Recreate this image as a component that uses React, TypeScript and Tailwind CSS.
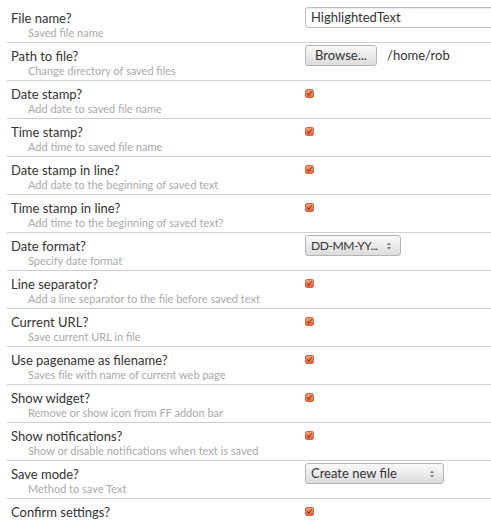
import React from "react";

interface Row {
  title: string;
  hint: string;
  control: "text" | "browse" | "check" | "dateSelect" | "modeSelect";
}

const rows: Row[] = [
  { title: "File name?", hint: "Saved file name", control: "text" },
  { title: "Path to file?", hint: "Change directory of saved files", control: "browse" },
  { title: "Date stamp?", hint: "Add date to saved file name", control: "check" },
  { title: "Time stamp?", hint: "Add time to saved file name", control: "check" },
  { title: "Date stamp in line?", hint: "Add date to the beginning of saved text", control: "check" },
  { title: "Time stamp in line?", hint: "Add time to the beginning of saved text?", control: "check" },
  { title: "Date format?", hint: "Specify date format", control: "dateSelect" },
  { title: "Line separator?", hint: "Add a line separator to the file before saved text", control: "check" },
  { title: "Current URL?", hint: "Save current URL in file", control: "check" },
  { title: "Use pagename as filename?", hint: "Saves file with name of current web page", control: "check" },
  { title: "Show widget?", hint: "Remove or show icon from FF addon bar", control: "check" },
  { title: "Show notifications?", hint: "Show or disable notifications when text is saved", control: "check" },
  { title: "Save mode?", hint: "Method to save Text", control: "modeSelect" },
  { title: "Confirm settings?", hint: "", control: "check" },
];

const Checkbox = () => (
  <span className="mt-[8px] block w-[9px] h-[9px] rounded-[2px] bg-gradient-to-b from-[#f4a27a] to-[#e2633a] border border-[#cf6a45]">
    <svg viewBox="0 0 9 9" className="w-full h-full">
      <path d="M1.5 4.3 L3.6 6.4 L7.6 1.6" fill="none" stroke="#8a3418" strokeWidth="1.4" />
    </svg>
  </span>
);

const Arrows = () => (
  <svg viewBox="0 0 6 10" className="w-[6px] h-[10px] shrink-0">
    <path d="M1 4 L3 1.5 L5 4 Z" fill="#777" />
    <path d="M1 6 L3 8.5 L5 6 Z" fill="#777" />
  </svg>
);

const SelectBox: React.FC<{ label: string; width: string; tight?: boolean }> = ({ label, width, tight }) => (
  <div
    className={`mt-[2px] h-[21px] ${width} flex items-center justify-between pl-[5px] pr-[8px] rounded-[3px] border border-[#b4b4b4] bg-gradient-to-b from-[#fafafa] to-[#dcdcdc] text-[#333] whitespace-nowrap`}
  >
    <span className={tight ? "text-[12px] tracking-[-0.4px]" : "text-[13px]"}>{label}</span>
    <Arrows />
  </div>
);

const Control: React.FC<{ kind: Row["control"] }> = ({ kind }) => {
  if (kind === "text")
    return (
      <div className="mt-[2px] h-[21px] w-[200px] flex items-center pl-[5px] rounded-[3px] border border-[#bdbdbd] bg-white text-[13px] text-[#333] shadow-[inset_0_1px_1px_rgba(0,0,0,0.08)]">
        HighlightedText
      </div>
    );
  if (kind === "browse")
    return (
      <div className="mt-[2px] flex items-center gap-[10px]">
        <div className="h-[21px] w-[72px] flex items-center justify-center rounded-[3px] border border-[#b4b4b4] bg-gradient-to-b from-[#fafafa] to-[#dcdcdc] text-[13px] text-[#333]">
          Browse...
        </div>
        <span className="text-[13px] text-[#333]">/home/rob</span>
      </div>
    );
  if (kind === "dateSelect") return <SelectBox label="DD-MM-YY..." width="w-[96px]" tight />;
  if (kind === "modeSelect") return <SelectBox label="Create new file" width="w-[139px]" />;
  return <Checkbox />;
};

export default function App() {
  return (
    <div
      className="w-[491px] h-[525px] overflow-hidden bg-white pt-[5px] pl-[7px]"
      style={{ fontFamily: "Lato, 'Open Sans', sans-serif" }}
    >
      {rows.map((row, i) => (
        <div key={i} className="flex h-[38px] border-b border-[#cfcfcf]">
          <div className="w-[298px] shrink-0">
            <div className="pl-[4px] pt-[5px] text-[13px] leading-[16px] text-[#333]">{row.title}</div>
            <div className="pl-[21px] text-[11px] leading-[14px] text-[#aaa] whitespace-nowrap">{row.hint}</div>
          </div>
          <div className="flex-1 min-w-0">
            <Control kind={row.control} />
          </div>
        </div>
      ))}
    </div>
  );
}
